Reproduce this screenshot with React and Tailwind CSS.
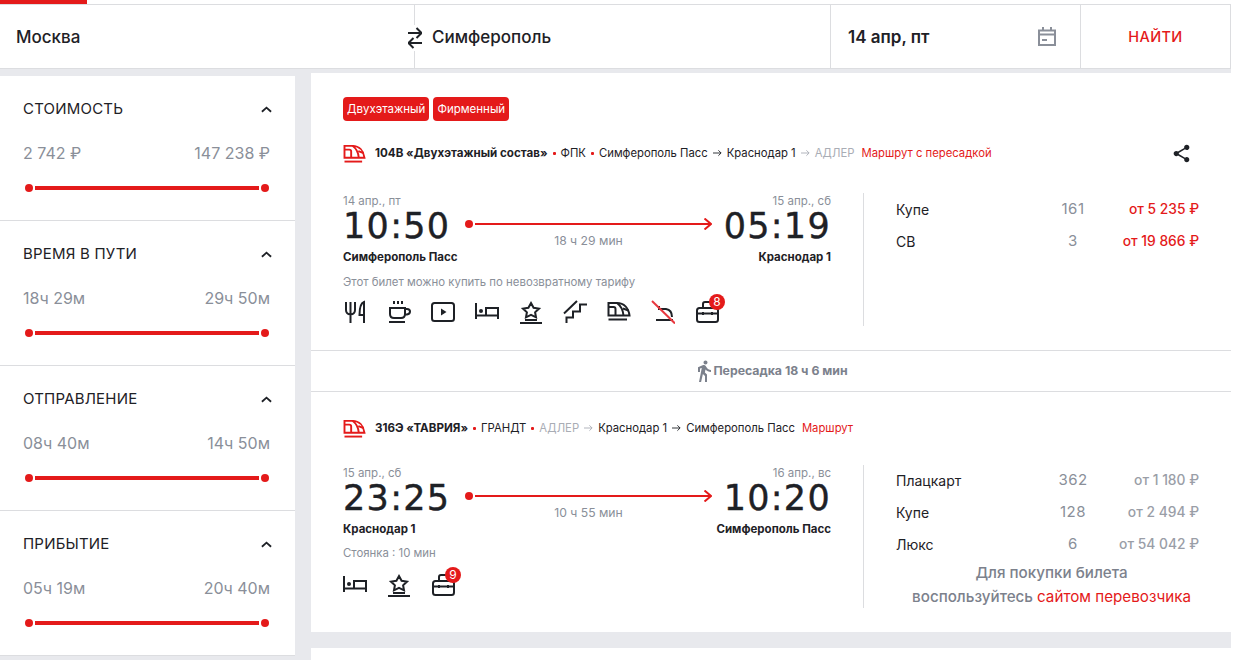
import { MdDirectionsWalk, MdShare } from 'react-icons/md';

const filters = [
  { title: 'Стоимость', from: '2 742 ₽', to: '147 238 ₽' },
  { title: 'Время в пути', from: '18ч 29м', to: '29ч 50м' },
  { title: 'Отправление', from: '08ч 40м', to: '14ч 50м' },
  { title: 'Прибытие', from: '05ч 19м', to: '20ч 40м' },
];

function Icon({ children, className = 'text-[#1e2126]' }) {
  return (
    <svg viewBox="0 0 24 24" className={`w-6 h-6 ${className}`} fill="none" stroke="currentColor" strokeWidth="2">
      {children}
    </svg>
  );
}

function TrainShape() {
  return (
    <>
      <path d="M1.500 15.500V3H10c7 0 11.500 5 12.500 12.500z" />
      <path d="M8.500 15.500V9q0-2-2-2H1.500M10 3c4 3 6 6.500 6.500 12.500M16 8.500l5.500 2" />
      <path d="M1.500 19.500H20" />
    </>
  );
}

function FoodIcon() {
  return (
    <Icon>
      <path d="M3 2v8q0 4 4.500 4.500Q12 14 12 10V2M7.500 2v21M21 23V2c-3 1-4.500 6-4.500 13H21" />
    </Icon>
  );
}

function CupIcon() {
  return (
    <Icon>
      <path d="M7 1v3M11 1v3M15 1v3M3 8h15v6q0 4-4 4H7q-4 0-4-4zM18 9h2q3 0 3 2.500T20 14.500h-2M2 22h16" />
    </Icon>
  );
}

function PlayIcon() {
  return (
    <Icon>
      <rect x="1" y="3" width="22" height="18" rx="2.500" />
      <path d="M10 8.500l5.500 3.500-5.500 3.500z" fill="currentColor" stroke="none" />
    </Icon>
  );
}

function BedIcon() {
  return (
    <Icon>
      <path d="M1 3v16M1 15.500h22M23 19V8H11v7.500" />
      <circle cx="6" cy="11" r="2" fill="currentColor" stroke="none" />
    </Icon>
  );
}

function StarIcon() {
  return (
    <Icon>
      <path d="M12 3l2.600 4.800 5.400.800-3.900 3.700.9 5-5-2.500-5 2.500.9-5L4 8.600l5.400-.800zM6 20h12" />
      <path d="M1 23h22" />
    </Icon>
  );
}

function StairsIcon() {
  return (
    <Icon>
      <path d="M1 13.500L14 1M24 4.500h-7v7h-7v6H3.500V23" />
    </Icon>
  );
}

function TrainIcon() {
  return (
    <Icon>
      <TrainShape />
    </Icon>
  );
}

function NoFoodIcon() {
  return (
    <Icon>
      <path d="M5 20h17M21 17q0-7-6-8H9M8 6v4" />
      <path d="M1 1l23 22.500" stroke="#e8383f" />
    </Icon>
  );
}

function CaseIcon({ count }) {
  return (
    <div className="relative w-6 h-6">
      <Icon>
        <rect x="2" y="8" width="21" height="14" rx="2.500" />
        <path d="M8 8V4q0-2 2-2h5q2 0 2 2v4M2 13.500h21M8 12v3M17 12v3" />
      </Icon>
      <span className="absolute left-[14px] top-[-6px] w-4 h-4 rounded-full bg-[#e41a1a] text-white text-[12px] leading-4 text-center">{count}</span>
    </div>
  );
}

function Filter({ title, from, to }) {
  return (
    <div className="h-[145px] border-b border-[#dcdde0] pl-[23px] pr-[25px] pt-6">
      <div className="flex items-center justify-between h-[19px]">
        <span className="uppercase text-[15px] tracking-[0.2px] text-[#1e2126]">{title}</span>
        <svg viewBox="0 0 12 7" className="w-[11px] h-[7px] mr-[-2px] mb-px text-[#1e2126]" fill="none" stroke="currentColor" strokeWidth="2">
          <path d="M1 6l5-4.500L11 6" />
        </svg>
      </div>
      <div className="flex justify-between mt-6 text-[16px] leading-5 text-[#8a8f99]">
        <span>{from}</span>
        <span>{to}</span>
      </div>
      <div className="flex items-center gap-[2px] ml-[2px] mr-px mt-[21px] h-2">
        <span className="w-2 h-2 rounded-full bg-[#e41a1a]" />
        <span className="flex-1 h-1 bg-[#e41a1a]" />
        <span className="w-2 h-2 rounded-full bg-[#e41a1a]" />
      </div>
    </div>
  );
}

function Route({ children }) {
  return <div className="flex items-center gap-[5px] text-[11.300px] leading-5 text-[#1e2126] whitespace-nowrap">{children}</div>;
}

function Dot() {
  return <span className="w-[3px] h-[3px] rounded-[1px] bg-[#e41a1a]" />;
}

function Arrow({ className }) {
  return (
    <svg viewBox="0 0 10 8" className={`w-[9px] h-2 ${className}`} fill="none" stroke="currentColor" strokeWidth="1">
      <path d="M0 4h9M6 1l3 3-3 3" />
    </svg>
  );
}

function TimeText({ children }) {
  return (
    <div className="text-[35px] leading-[34px] tracking-[1.300px] text-[#1e2126] font-['DejaVu_Sans',sans-serif] [-webkit-text-stroke:0.4px_#1e2126]">
      {children}
    </div>
  );
}

function Segment({ depDate, depTime, depStation, arrDate, arrTime, arrStation, duration, note, noteClass, iconsClass, icons, fares, fareClass, colClass, extra }) {
  return (
    <div className="flex">
      <div className={`w-[488px] shrink-0 ${colClass}`}>
        <div className="flex">
          <div className="w-[106px] shrink-0 whitespace-nowrap">
            <div className="text-[11.500px] leading-4 text-[#8a8f99]">{depDate}</div>
            <TimeText>{depTime}</TimeText>
            <div className="mt-[6px] text-[11.500px] leading-4 font-bold text-[#1e2126]">{depStation}</div>
          </div>
          <div className="flex-1 ml-4 mr-[13px] pt-[27px]">
            <div className="flex items-center h-2 gap-[2px]">
              <span className="w-2 h-2 rounded-full bg-[#e41a1a] shrink-0" />
              <svg viewBox="0 0 237 12" className="w-[237px] h-3 text-[#e41a1a] shrink-0" fill="none" stroke="currentColor" strokeWidth="2">
                <path d="M0 6h236M229.500 .500L236 6l-6.500 5.500" />
              </svg>
            </div>
            <div className="mt-[5px] text-center text-[12.200px] leading-4 text-[#8a8f99]">{duration}</div>
          </div>
          <div className="w-[106px] shrink-0 flex flex-col items-end whitespace-nowrap">
            <div className="text-[11.500px] leading-4 text-[#8a8f99]">{arrDate}</div>
            <TimeText>{arrTime}</TimeText>
            <div className="mt-[6px] text-[11.500px] leading-4 font-bold text-[#1e2126]">{arrStation}</div>
          </div>
        </div>
        <div className={`text-[11.400px] leading-4 text-[#8a8f99] ${noteClass}`}>{note}</div>
        <div className={`flex gap-5 ${iconsClass}`}>{icons}</div>
      </div>
      <div className={`ml-8 pl-8 flex-1 border-l border-[#dcdde0] ${colClass}`}>
        <div className={fareClass}>
          {fares.map((f) => (
            <div key={f.name} className="grid grid-cols-[147px_60px_96px] h-8 items-center text-[14px]">
              <span className="text-[#1e2126]">{f.name}</span>
              <span className="text-center text-[15px] tracking-[0.5px] text-[#8a8f99]">{f.seats}</span>
              <span className={`text-right text-[13.800px] font-medium whitespace-nowrap ${f.sold ? 'text-[#9a9ea7]' : 'text-[#e41a1a]'}`}>{f.price}</span>
            </div>
          ))}
        </div>
        {extra}
      </div>
    </div>
  );
}

export default function App() {
  return (
    <div className="w-[1234px] h-[660px] overflow-hidden bg-white font-['Inter',sans-serif]">
      <div className="w-[1231px] h-full bg-[#e8e9ed]">
        <div className="bg-white h-[4px] w-[1234px]">
          <div className="w-[87px] h-full bg-[#e41a1a]" />
        </div>

        {/* search bar */}
        <div className="relative flex h-[65px] bg-white border-y border-[#dcdde0] border-r">
          <div className="w-[415px] border-r border-[#dcdde0] pl-4 pt-[3px] flex items-center text-[17px] font-medium text-[#1e2126]">Москва</div>
          <div className="absolute left-[406px] top-[20px] bg-white p-[2px]">
            <svg viewBox="0 0 14 22" className="w-[14px] h-[22px] text-[#1e2126]" fill="none" stroke="currentColor" strokeWidth="2">
              <path d="M0 6h13M8.500 1l5 5-5 5M14 16H1M5.500 11l-5 5 5 5" />
            </svg>
          </div>
          <div className="w-[416px] border-r border-[#dcdde0] pl-[17px] pt-[3px] flex items-center text-[17px] font-medium text-[#1e2126]">Симферополь</div>
          <div className="w-[250px] border-r border-[#dcdde0] pl-[17px] pr-[24px] flex items-center justify-between text-[17px] font-semibold text-[#1e2126]">
            <span className="pt-[3px]">14 апр, пт</span>
            <svg viewBox="0 0 18 19" className="w-[18px] h-[19px] text-[#8a8f99]" fill="none" stroke="currentColor" strokeWidth="2">
              <path d="M1 3.500h16v14.500H1zM1 7.500h16M5 0v4M13 0v4M4 13h5" />
            </svg>
          </div>
          <div className="flex-1 flex items-center justify-center pt-px text-[14.500px] font-medium tracking-[0.4px] text-[#e41a1a]">НАЙТИ</div>
        </div>

        <div className="flex items-start gap-4 pt-1">
          {/* filters */}
          <aside className="w-[295px] shrink-0 bg-white mt-[3px]">
            {filters.map((f) => (
              <Filter key={f.title} {...f} />
            ))}
          </aside>

          {/* result */}
          <main className="flex-1">
            <div className="bg-white pt-6 h-[559px]">
              <div className="px-8">
                <div className="flex gap-1">
                  <span className="h-6 px-1 rounded bg-[#e41a1a] text-white text-[11.500px] leading-6">Двухэтажный</span>
                  <span className="h-6 px-1 rounded bg-[#e41a1a] text-white text-[11.500px] leading-6">Фирменный</span>
                </div>

                <div className="flex items-center mt-[22px] h-5">
                  <svg viewBox="0 0 24 21" className="w-[23px] h-5 text-[#e41a1a] shrink-0" fill="none" stroke="currentColor" strokeWidth="2">
                    <TrainShape />
                  </svg>
                  <div className="ml-[9px] flex-1">
                    <Route>
                      <b className="font-bold text-[11.600px]">104В «Двухэтажный состав»</b>
                      <Dot />
                      <span>ФПК</span>
                      <Dot />
                      <span>Симферополь Пасс</span>
                      <Arrow className="text-[#1e2126]" />
                      <span>Краснодар 1</span>
                      <Arrow className="text-[#a9adb5]" />
                      <span className="text-[#a9adb5]">АДЛЕР</span>
                      <span className="text-[#e41a1a] ml-[2px]">Маршрут с пересадкой</span>
                    </Route>
                  </div>
                  <MdShare className="w-[21px] h-[21px] mr-[7px] text-[#1e2126]" />
                </div>

                <div className="mt-[30px]">
                  <Segment
                    depDate="14 апр., пт"
                    depTime="10:50"
                    depStation="Симферополь Пасс"
                    arrDate="15 апр., сб"
                    arrTime="05:19"
                    arrStation="Краснодар 1"
                    duration="18 ч 29 мин"
                    note="Этот билет можно купить по невозвратному тарифу"
                    noteClass="mt-[9px]"
                    iconsClass="mt-[10px]"
                    colClass="h-[133px]"
                    fareClass=""
                    icons={
                      <>
                        <FoodIcon />
                        <CupIcon />
                        <PlayIcon />
                        <BedIcon />
                        <StarIcon />
                        <StairsIcon />
                        <TrainIcon />
                        <NoFoodIcon />
                        <CaseIcon count="8" />
                      </>
                    }
                    fares={[
                      { name: 'Купе', seats: '161', price: 'от 5 235 ₽' },
                      { name: 'СВ', seats: '3', price: 'от 19 866 ₽' },
                    ]}
                  />
                </div>
              </div>

              {/* transfer */}
              <div className="mt-[24px] h-[42px] border-y border-[#dcdde0] flex items-center justify-center text-[12.300px] font-bold text-[#7c818c]">
                <MdDirectionsWalk className="w-6 h-6 -mr-[3px]" />
                <span className="mr-[2px]">Пересадка 18 ч 6 мин</span>
              </div>

              <div className="px-8">
                <div className="flex items-center mt-[26px] h-5">
                  <svg viewBox="0 0 24 21" className="w-[23px] h-5 text-[#e41a1a] shrink-0" fill="none" stroke="currentColor" strokeWidth="2">
                    <TrainShape />
                  </svg>
                  <div className="ml-[9px] flex-1">
                    <Route>
                      <b className="font-bold text-[11.600px]">316Э «ТАВРИЯ»</b>
                      <Dot />
                      <span>ГРАНДТ</span>
                      <Dot />
                      <span className="text-[#a9adb5]">АДЛЕР</span>
                      <Arrow className="text-[#a9adb5]" />
                      <span>Краснодар 1</span>
                      <Arrow className="text-[#1e2126]" />
                      <span>Симферополь Пасс</span>
                      <span className="text-[#e41a1a] ml-[2px]">Маршрут</span>
                    </Route>
                  </div>
                </div>

                <div className="mt-[27px]">
                  <Segment
                    depDate="15 апр., сб"
                    depTime="23:25"
                    depStation="Краснодар 1"
                    arrDate="16 апр., вс"
                    arrTime="10:20"
                    arrStation="Симферополь Пасс"
                    duration="10 ч 55 мин"
                    note="Стоянка : 10 мин"
                    noteClass="mt-[8px]"
                    iconsClass="mt-[12px]"
                    colClass="h-[143px]"
                    fareClass="-mt-px"
                    icons={
                      <>
                        <BedIcon />
                        <StarIcon />
                        <CaseIcon count="9" />
                      </>
                    }
                    fares={[
                      { name: 'Плацкарт', seats: '362', price: 'от 1 180 ₽', sold: true },
                      { name: 'Купе', seats: '128', price: 'от 2 494 ₽', sold: true },
                      { name: 'Люкс', seats: '6', price: 'от 54 042 ₽', sold: true },
                    ]}
                    extra={
                      <div className="pl-2 text-center text-[15.200px] leading-6 font-medium text-[#7c818c] whitespace-nowrap mt-[1px]">
                        <div>Для покупки билета</div>
                        <div>
                          воспользуйтесь <span className="font-normal text-[#e41a1a]">сайтом перевозчика</span>
                        </div>
                      </div>
                    }
                  />
                </div>
              </div>
            </div>
            <div className="bg-white h-10 mt-4" />
          </main>
        </div>
      </div>
    </div>
  );
}
